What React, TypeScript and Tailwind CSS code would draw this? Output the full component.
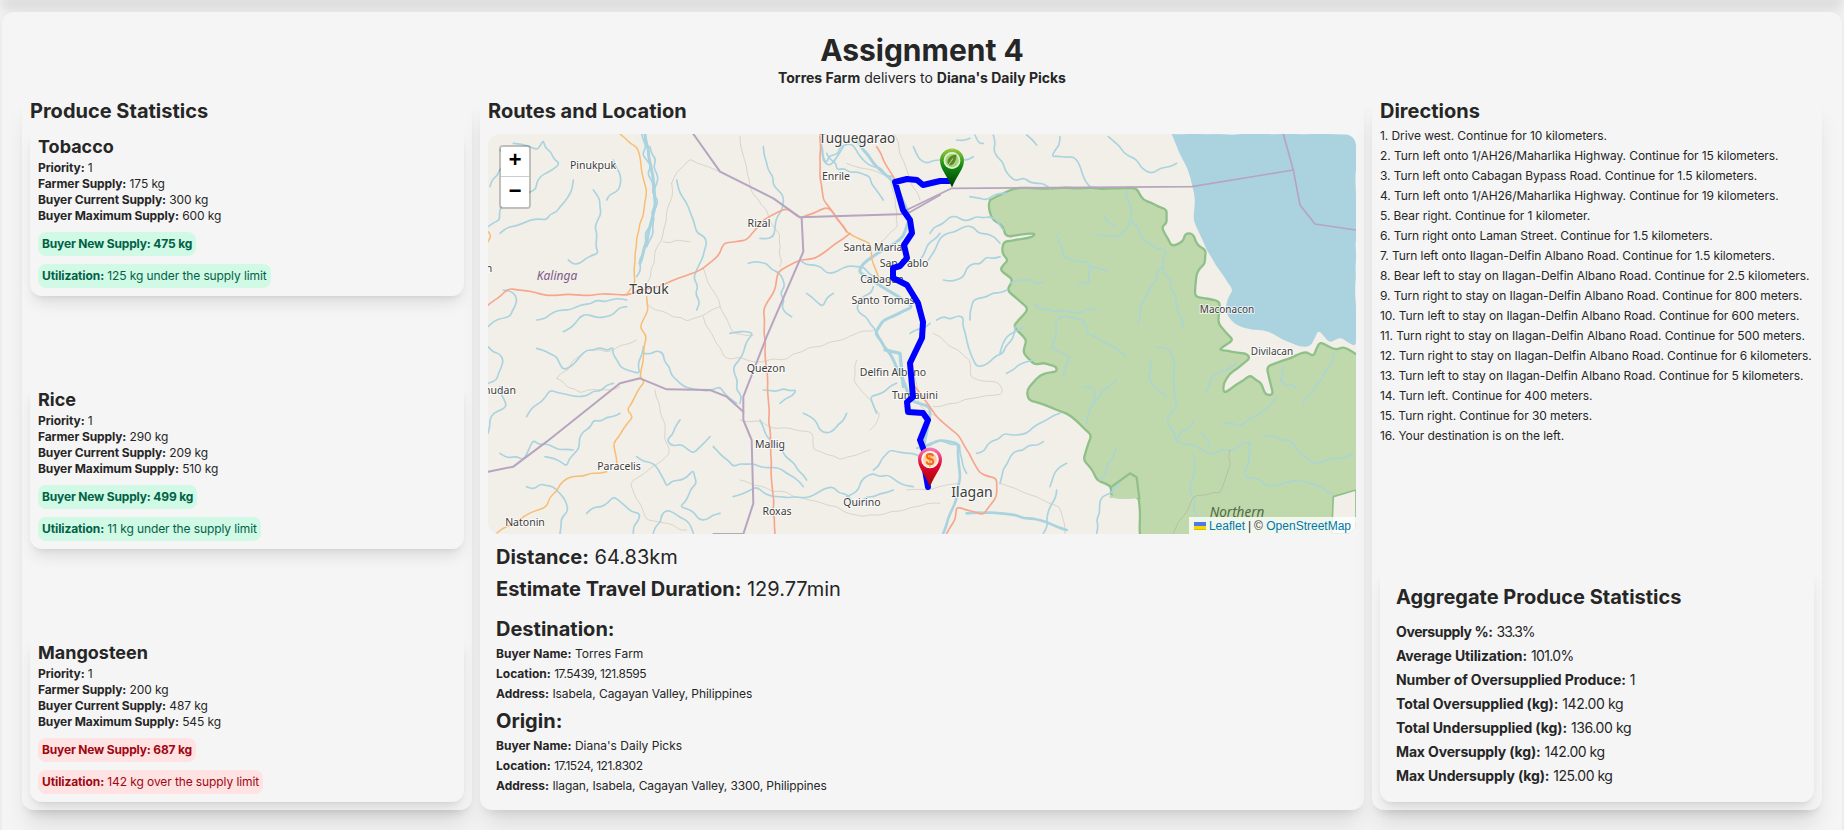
const produce = [
  { name: "Tobacco", farmer: 175, current: 300, max: 600, next: 475, util: "125 kg under the supply limit", over: false },
  { name: "Rice", farmer: 290, current: 209, max: 510, next: 499, util: "11 kg under the supply limit", over: false },
  { name: "Mangosteen", farmer: 200, current: 487, max: 545, next: 687, util: "142 kg over the supply limit", over: true },
];

const directions = [
  "1. Drive west. Continue for 10 kilometers.",
  "2. Turn left onto 1/AH26/Maharlika Highway. Continue for 15 kilometers.",
  "3. Turn left onto Cabagan Bypass Road. Continue for 1.5 kilometers.",
  "4. Turn left onto 1/AH26/Maharlika Highway. Continue for 19 kilometers.",
  "5. Bear right. Continue for 1 kilometer.",
  "6. Turn right onto Laman Street. Continue for 1.5 kilometers.",
  "7. Turn left onto Ilagan-Delfin Albano Road. Continue for 1.5 kilometers.",
  "8. Bear left to stay on Ilagan-Delfin Albano Road. Continue for 2.5 kilometers.",
  "9. Turn right to stay on Ilagan-Delfin Albano Road. Continue for 800 meters.",
  "10. Turn left to stay on Ilagan-Delfin Albano Road. Continue for 600 meters.",
  "11. Turn right to stay on Ilagan-Delfin Albano Road. Continue for 500 meters.",
  "12. Turn right to stay on Ilagan-Delfin Albano Road. Continue for 6 kilometers.",
  "13. Turn left to stay on Ilagan-Delfin Albano Road. Continue for 5 kilometers.",
  "14. Turn left. Continue for 400 meters.",
  "15. Turn right. Continue for 30 meters.",
  "16. Your destination is on the left.",
];

const aggregate = [
  ["Oversupply %:", "33.3%", "tracking-[-0.4px]", "tracking-[-1px]"],
  ["Average Utilization:", "101.0%", "tracking-[-0.15px]", "tracking-[-0.6px]"],
  ["Number of Oversupplied Produce:", "1", "tracking-[-0.1px]", ""],
  ["Total Oversupplied (kg):", "142.00 kg", "tracking-[-0.1px]", "tracking-[-0.4px]"],
  ["Total Undersupplied (kg):", "136.00 kg", "tracking-[-0.1px]", "tracking-[-0.4px]"],
  ["Max Oversupply (kg):", "142.00 kg", "tracking-[-0.15px]", "tracking-[-0.5px]"],
  ["Max Undersupply (kg):", "125.00 kg", "tracking-[-0.15px]", "tracking-[-0.5px]"],
];

// map traces, in 3x crop coordinates of the left and right half of the map
const riversLeft = [
  "M485 42 L500 120 L520 200 L530 260 L510 320 L490 400 L470 470",
  "M510 80 L535 180 L520 300 L500 380",
  "M24 320 L60 300 L70 250 L140 240 L180 170 L240 130 L190 60 L170 90 L100 70",
  "M340 210 L360 260 L345 320 L355 400 L300 430 L265 420",
  "M280 180 L240 260 L200 300 L130 310 L60 340",
  "M590 180 L640 300 L680 370 L650 450 L650 570",
  "M24 620 L90 590 L110 530 L70 510",
  "M170 600 L250 570 L350 540 L440 540",
  "M250 635 L300 590 L380 590 L440 560",
  "M805 430 L860 430 L910 480 L905 560 L935 590",
  "M170 685 L230 710 L250 750 L320 690 L400 680 L420 740 L480 760 L490 680",
  "M490 700 L550 700 L590 780 L660 810 L720 800 L770 850",
  "M140 890 L160 860 L210 810 L300 830 L400 790",
  "M24 680 L70 720 L50 780 L24 790",
  "M24 940 L40 880 L80 860 L60 800",
  "M750 640 L820 640 L790 700 L760 740 L780 850",
  "M850 810 L950 810 L900 850",
  "M195 1010 L260 1040 L340 900 L420 880",
  "M60 1000 L130 1020 L160 960 L280 990",
  "M470 1010 L530 1040 L560 1100 L640 1050 L650 1090 L600 1160 L680 1200 L720 1180",
  "M140 1100 L220 1100 L260 1150 L240 1240",
  "M700 980 L760 1040 L840 1040 L920 1060 L970 1100",
  "M840 900 L870 960 L930 1020 L980 1080",
  "M760 1130 L830 1100 L900 1130 L1010 1120 L1060 1100 L1130 1160 L1160 1130 L1240 1110",
  "M520 1240 L560 1170 L620 1200 L640 1240",
  "M850 80 L880 170 L910 250 L880 350 L840 355",
  "M1020 50 L1040 130 L1080 80 L1110 70 L1160 130 L1240 170",
  "M1040 100 L1070 150 L1170 170 L1210 240",
  "M1300 80 L1340 130 L1380 120",
  "M1230 480 L1130 440 L1040 460 L960 420",
  "M1380 340 L1340 380 L1320 420",
  "M1190 880 L1170 830 L1250 790",
  "M1180 1050 L1230 990 L1280 1000 L1320 1010",
  "M1100 1130 L1180 1060 L1300 1100",
  "M30 200 L90 120 L60 90",
  "M400 120 L420 200 L380 240",
  "M600 900 L560 960 L640 1000 L690 950",
  "M320 1180 L400 1130 L480 1180 L460 1240",
  "M1200 660 L1130 560 L1180 500",
  "M980 520 L1030 560 L1060 520",
  "M1100 880 L1040 940 L970 880",
];

const riversRight = [
  "M280 45 L290 110 L330 170 L410 190 L450 205",
  "M380 45 L410 75",
  "M625 50 L690 110 L760 160 L830 130",
  "M480 50 L455 110 L520 110 L550 170 L570 200",
  "M225 45 L235 70 L250 70",
  "M170 60 L210 55 M180 120 L220 110",
  "M210 230 L260 240 L320 220",
  "M90 340 L150 290 L210 300 L270 290 L310 330",
  "M130 480 L170 480 L220 430 L300 410",
  "M85 420 L140 340 L220 320 L300 370",
  "M210 600 L220 540 L320 510",
  "M110 600 L190 590 L200 660 L230 740 L310 700 L345 620",
  "M30 640 L90 610",
  "M370 620 L320 650 L300 700",
  "M230 1000 L310 940 L380 940 L440 900 L480 880",
  "M300 1090 L330 1010 L430 965",
  "M450 1100 L480 1040 L500 1030 M430 1240 L470 1110",
  "M50 985 L110 960 L180 970 L200 1060",
  "M590 1240 L600 1140 L660 1090",
  "M320 760 L400 720",
];

const riversPark = [
  "M680 210 L690 300 L730 360 L800 390 L790 440 L750 500 L720 560 L715 610",
  "M790 440 L830 540 L850 620",
  "M585 345 L660 350 L690 300 M610 285 L650 320",
  "M470 345 L490 410 L570 430 L570 490 L535 495 M570 440 L620 455",
  "M330 490 L430 485",
  "M400 550 L420 570 L520 580 L590 570",
  "M455 680 L480 590 L550 600 L560 640 L620 670 L675 710",
  "M455 680 L510 710 L490 770",
  "M770 680 L810 690 L820 760 L830 850 L800 900 L840 970 L950 1000 L1050 970",
  "M750 720 L750 780 L800 830",
  "M650 780 L580 850 L560 910 M550 800 L580 800 L580 850",
  "M830 960 L880 905 M905 940 L930 980",
  "M1130 830 L1080 880 L1020 920 L970 910",
  "M1010 730 L950 760 L915 820",
  "M1150 740 L1140 780 L1190 810 M1300 700 L1270 760 L1210 850",
  "M1050 970 L1030 1060 L1100 1100 L1200 1080 L1300 1120",
  "M1090 950 L1170 960 L1240 1030 L1360 1000",
  "M880 1000 L870 1120 L900 1200",
  "M650 980 L620 1040 L600 1080",
];

const roads = [
  "M24 555 L60 530 L85 505 L140 512 L190 525 L290 525 L400 523 L440 525 L560 490 L670 445 L720 400 L730 370 L800 360 L850 300 L920 265 L960 295 L1045 262 L1100 335",
  "M1020 42 L1020 150 L1030 240 L1100 335",
  "M1190 80 L1245 180",
  "M1110 340 L1005 415 L960 420 L895 455 L880 520 L850 570 L885 1242",
];

const tracks = [
  "M420 42 L470 80 L500 220 L465 400 L465 490 L440 525",
  "M500 530 L505 570 L480 620 L500 650 L480 775 L495 785 L440 870 L460 890 L400 970 L410 1040",
  "M380 1055 L260 1075 L210 1130 L200 1160 L130 1190 L50 1240",
  "M1100 335 L1170 370 L1175 420 L1195 470",
  "M24 335 L35 345 L24 365",
];

const borders = [
  "M640 42 L720 155 L880 235 L960 292 L1280 282 L1380 225",
  "M965 295 L970 395 L860 650 L790 830 L790 900 L815 960 L820 1150 L790 1242 L700 1242",
  "M24 1055 L100 1040 L200 965 L420 790 L480 775 L560 808 L690 810 L740 830 L790 875",
];

const greyLines = [
  "M575 190 L560 300 L500 490 M630 365 L550 365",
  "M575 190 L630 115 L720 155",
  "M670 445 L760 640 L820 645",
  "M505 555 L620 605 L720 560",
  "M670 590 L730 710 L800 720 L900 720 L1000 680 L1130 640 L1190 630",
  "M230 775 L320 690 L400 690 L470 660",
  "M230 775 L300 820 L420 800",
  "M525 810 L570 1000 L450 1090 L500 1200 L620 1230",
  "M780 900 L1000 940 L1000 990 L1080 1020 L1170 990",
  "M780 1080 L1150 1190 L1380 1150",
  "M1130 720 L1120 780 L1200 880 L1170 930",
  "M780 50 L800 140 L810 200 L900 340 L900 440",
  "M1240 40 L1320 240 M1100 130 L1230 170 L1255 320 L1200 370",
];

const labels = [
  { x: 369, y: 9, t: "Tuguegarao", s: 13.5 },
  { x: 105, y: 35, t: "Pinukpuk", s: 10.5 },
  { x: 348, y: 46, t: "Enrile", s: 10.5 },
  { x: 271, y: 93, t: "Rizal", s: 10.5 },
  { x: 385, y: 117, t: "Santa Maria", s: 10.5 },
  { x: 416, y: 133, t: "San Pablo", s: 10.5 },
  { x: 394, y: 149, t: "Cabagan", s: 10.5 },
  { x: 395, y: 170, t: "Santo Tomas", s: 10.5 },
  { x: 161, y: 160, t: "Tabuk", s: 14 },
  { x: 278, y: 238, t: "Quezon", s: 10.5 },
  { x: 405, y: 242, t: "Delfin Albano", s: 10.5 },
  { x: 427, y: 265, t: "Tumauini", s: 10.5 },
  { x: 282, y: 314, t: "Mallig", s: 10.5 },
  { x: 131, y: 336, t: "Paracelis", s: 10.5 },
  { x: 374, y: 372, t: "Quirino", s: 10.5 },
  { x: 289, y: 381, t: "Roxas", s: 10.5 },
  { x: 37, y: 392, t: "Natonin", s: 10.5 },
  { x: 12, y: 260, t: "nudan", s: 10.5 },
  { x: 1, y: 138, t: "n", s: 10.5 },
  { x: 484, y: 363, t: "Ilagan", s: 14 },
  { x: 739, y: 179, t: "Maconacon", s: 10 },
  { x: 784, y: 221, t: "Divilacan", s: 10 },
];

const route =
  "M461 47 L452 47 L435 51 L429 46 L419 45 L407 48 L415 76 L422 86 L424 99 L416 111 L419 124 L412 132 L405 134 L405 144 L419 151 L430 169 L435 188 L434 204 L422 229 L425 263 L419 268 L420 278 L435 279 L440 286 L432 306 L437 319 L436 330 L440 353";

const PIN = "M12 0 C18.6 0 24 5.4 24 12 C24 20 17 27 12 39 C7 27 0 20 0 12 C0 5.4 5.4 0 12 0 Z";

const noise = (k: number) => {
  const v = Math.sin(k * 12.9898) * 43758.5453;
  return (v - Math.floor(v)) * 2 - 1;
};

// breaks a straight trace into a natural wobbling line
function wobble(d: string, amp: number, step: number) {
  return d
    .split("M")
    .filter(Boolean)
    .map((part, index) => {
      const closed = part.includes("Z");
      const n = (part.match(/-?\d+(\.\d+)?/g) || []).map(Number);
      const pts: number[][] = [];
      for (let i = 0; i < n.length; i += 2) pts.push([n[i], n[i + 1]]);
      if (closed) pts.push(pts[0]);
      const out: number[][] = [];
      pts.forEach((p, i) => {
        if (i === pts.length - 1) {
          out.push(p);
          return;
        }
        const q = pts[i + 1];
        const dx = q[0] - p[0];
        const dy = q[1] - p[1];
        const len = Math.hypot(dx, dy) || 1;
        const count = Math.max(1, Math.round(len / step));
        for (let j = 0; j < count; j++) {
          const t = j / count;
          const off = j === 0 ? 0 : noise(p[0] + p[1] * 3 + j * 7 + index) * amp;
          out.push([p[0] + dx * t - (dy / len) * off, p[1] + dy * t + (dx / len) * off]);
        }
      });
      let path = `M${out[0][0].toFixed(1)} ${out[0][1].toFixed(1)}`;
      for (let i = 1; i < out.length - 1; i++) {
        const mx = (out[i][0] + out[i + 1][0]) / 2;
        const my = (out[i][1] + out[i + 1][1]) / 2;
        path += ` Q${out[i][0].toFixed(1)} ${out[i][1].toFixed(1)} ${mx.toFixed(1)} ${my.toFixed(1)}`;
      }
      const last = out[out.length - 1];
      return `${path} L${last[0].toFixed(1)} ${last[1].toFixed(1)}${closed ? " Z" : ""}`;
    })
    .join(" ");
}

function MapView() {
  return (
    <div className="relative mx-2 mt-[9px] h-[400px] overflow-hidden rounded-xl bg-[#f2efe9]">
      <svg width="868" height="400" viewBox="0 0 868 400" className="block">
        <defs>
          <linearGradient id="greenPin" x1="0" y1="0" x2="0" y2="1">
            <stop offset="0" stopColor="#9ccc3c" />
            <stop offset="0.45" stopColor="#128a12" />
            <stop offset="1" stopColor="#003a00" />
          </linearGradient>
          <linearGradient id="redPin" x1="0" y1="0" x2="0" y2="1">
            <stop offset="0" stopColor="#f77fc0" />
            <stop offset="0.45" stopColor="#e00a32" />
            <stop offset="1" stopColor="#a80000" />
          </linearGradient>
          <linearGradient id="coin" x1="0" y1="0" x2="0" y2="1">
            <stop offset="0" stopColor="#ff9a3c" />
            <stop offset="1" stopColor="#ffe0b0" />
          </linearGradient>
        </defs>

        <g transform="translate(-8 -14) scale(0.33333)" fill="none" strokeLinejoin="round" strokeLinecap="round">
          {greyLines.map((d) => (
            <path key={d} d={wobble(d, 7, 22)} stroke="#cdc9bf" strokeWidth="2.2" />
          ))}
          <path d={wobble("M1130 60 L1180 130 L1245 190 L1290 290 L1270 350 L1150 430 L1135 455 L1160 470 L1190 490 L1300 560 L1210 600 L1185 640 L1230 700 L1265 770 L1290 840 L1350 860 L1345 910 L1330 990", 3, 30)} stroke="#a9d3df" strokeWidth="9" />
          <path d="M1090 80 C1060 130 1050 150 1030 120 L1022 70" stroke="#a9d3df" strokeWidth="5" />
          <path d="M1215 690 L1260 700 L1270 800" stroke="#a9d3df" strokeWidth="10" />
          <path d={wobble("M495 42 L515 150 L525 260 L505 340 L480 430", 3, 24)} stroke="#a9d3df" strokeWidth="9" />
          {riversLeft.map((d) => (
            <path key={d} d={wobble(d, 10, 22)} stroke="#a9d3df" strokeWidth="5" />
          ))}
          {tracks.map((d) => (
            <path key={d} d={wobble(d, 4, 24)} stroke="#f8bd72" strokeWidth="4.5" />
          ))}
          {roads.map((d) => (
            <path key={d} d={wobble(d, 2.5, 24)} stroke="#f7a68c" strokeWidth="5" />
          ))}
          {borders.map((d) => (
            <path key={d} d={d} stroke="#b7a4bf" strokeWidth="6" />
          ))}
        </g>

        <g transform="translate(412 -14) scale(0.33333)" strokeLinejoin="round" strokeLinecap="round">
          <path
            d={wobble("M815 42 L1368 42 L1368 680 L1320 650 L1290 670 L1255 630 L1230 680 L1200 680 L1090 630 L1060 630 L1000 610 L975 570 L985 530 L1000 510 L950 440 L920 390 L880 300 L885 240 L875 190 L855 130 Z", 3, 30)}
            fill="#aad3df"
          />
          <path
            d={wobble("M270 240 L320 215 L345 205 L710 205 L730 240 L800 268 L800 310 L785 320 L815 380 L850 365 L855 340 L880 340 L890 375 L918 390 L915 430 L890 460 L885 530 L960 545 L955 610 L1000 660 L955 690 L1040 700 L1050 715 L990 760 L970 790 L970 820 L1050 765 L1085 790 L1095 825 L1120 825 L1100 740 L1220 695 L1240 710 L1260 665 L1310 690 L1330 680 L1380 710 L1390 1260 L722 1260 L716 1130 L632 1130 L635 1100 L590 1080 L580 1055 L550 1020 L575 945 L500 880 L385 840 L380 810 L420 765 L470 755 L470 740 L430 728 L405 735 L370 700 L380 660 L340 620 L385 565 L320 510 L340 480 L300 450 L325 420 L305 400 L310 365 L400 350 L405 340 L330 350 L315 345 L310 320 L275 295 L265 260 Z", 2.5, 26)}
            fill="#c0d9ac"
            stroke="#8fc08a"
            strokeWidth="7"
          />
          <path d="M632 1130 L716 1130 L710 1072" fill="none" stroke="#c0d9ac" strokeWidth="8" />
          <path d="M635 1100 L690 1060 L710 1072 L718 1135" fill="none" stroke="#8fc08a" strokeWidth="7" />
          <path d="M1295 1240 L1300 1130 L1368 1110 L1368 1244 Z" fill="#f2efe9" stroke="#8fc08a" strokeWidth="5" />
          <g fill="none">
            {riversRight.map((d) => (
              <path key={d} d={wobble(d, 10, 22)} stroke="#a9d3df" strokeWidth="5" />
            ))}
            {riversPark.map((d) => (
              <path key={d} d={wobble(d, 9, 22)} stroke="#a9d5d6" strokeWidth="4.5" />
            ))}
            <path d={wobble("M820 1240 L880 1130 L960 1120 L985 1050 L990 990", 6, 20)} stroke="#b5bfa5" strokeWidth="3" />
            <path d={wobble("M40 760 L60 860 L110 890 M100 640 L210 720 L210 770 L300 790 L310 820 L100 860", 5, 24)} stroke="#cdc9bf" strokeWidth="2.2" />
            <path d={wobble("M300 1090 L480 1160 L495 1240 M20 1110 L90 1110 L180 1090", 5, 24)} stroke="#cdc9bf" strokeWidth="2.2" />
            <path d={wobble("M60 985 L120 960 L175 970 L180 1060 L165 1150 L130 1240", 3, 26)} stroke="#a9d3df" strokeWidth="8" />
            <path d={wobble("M200 1180 L300 1180 L420 1200 L500 1230", 3, 26)} stroke="#a9d3df" strokeWidth="8" />
            <path d={wobble("M45 800 L110 890 L175 945 L240 1060 L290 1075 L290 1130 L250 1185 L170 1160 L165 1200 L140 1240", 2, 24)} stroke="#f7a68c" strokeWidth="5" />
            <path d="M155 205 L875 200 L1180 150 M1150 42 L1180 150 L1200 255 L1245 312 L1368 330 M155 205 L20 270" stroke="#b7a4bf" strokeWidth="5" />
          </g>
        </g>

        {labels.map((l) => (
          <text
            key={l.t}
            x={l.x}
            y={l.y}
            fontSize={l.s}
            textAnchor="middle"
            fontFamily="'Noto Sans', sans-serif"
            fill="#3d3d3d"
            stroke="#ffffff"
            strokeOpacity="0.7"
            strokeWidth="2"
            paintOrder="stroke"
          >
            {l.t}
          </text>
        ))}
        <text x="69" y="146" fontSize="12" fontStyle="italic" textAnchor="middle" fontFamily="'Noto Sans', sans-serif" fill="#7e5a86">
          Kalinga
        </text>
        <text x="749" y="383" fontSize="13.5" fontStyle="italic" textAnchor="middle" fontFamily="'Noto Sans', sans-serif" fill="#4f6a45">
          Northern
        </text>

        <path d={route} fill="none" stroke="#0000ff" strokeWidth="6" strokeLinejoin="round" strokeLinecap="round" />

        <g transform="translate(452 14.5)">
          <path d={PIN} fill="url(#greenPin)" />
          <circle cx="12" cy="12" r="8.4" fill="#e3f3d2" />
          <circle cx="12" cy="12" r="6.8" fill="#a9d47a" />
          <path d="M16.5 6 C11 6.5 7 9.5 7.5 14 C7.8 16 9 17 10.5 17 C14.5 16.5 16.5 11 16.5 6 Z" fill="#5c8a28" />
          <path d="M7 18.5 L13 10" stroke="#e3f3d2" strokeWidth="0.7" />
        </g>
        <g transform="translate(430 313.5)">
          <path d={PIN} fill="url(#redPin)" />
          <circle cx="12" cy="12" r="8.8" fill="#fff6f0" />
          <circle cx="12" cy="12.5" r="7" fill="url(#coin)" opacity="0.6" />
          <text x="12" y="17.8" fontSize="16" fontWeight="700" textAnchor="middle" fontFamily="'Liberation Sans', sans-serif" fill="#f26a12">
            $
          </text>
        </g>
      </svg>

      <div className="absolute left-[11px] top-[11px] w-[32px] overflow-hidden rounded-[4px] border-2 border-black/20 bg-clip-padding font-['Liberation_Mono',monospace] text-[22px] font-bold text-black">
        <div className="flex h-[30px] w-full items-center justify-center border-b border-[#cccccc] bg-white">+</div>
        <div className="flex h-[30px] w-full items-center justify-center bg-white">−</div>
      </div>

      <div className="absolute bottom-0 right-0 flex h-[17px] items-center bg-white/80 px-[5px] font-['Liberation_Sans',sans-serif] text-xs text-[#333333]">
        <svg width="12" height="8" viewBox="0 0 12 8" className="mr-[3px]">
          <rect width="12" height="4" fill="#4C7BE1" />
          <rect y="4" width="12" height="3" fill="#FFD500" />
          <rect y="7" width="12" height="1" fill="#E0BC00" />
        </svg>
        <span className="text-[#0078a8]">Leaflet</span>
        <span className="mx-[3px]">|</span>
        <span>©&nbsp;</span>
        <span className="text-[#0078a8]">OpenStreetMap</span>
      </div>
    </div>
  );
}

function ProduceCard({ item }: { item: (typeof produce)[number] }) {
  const tone = item.over ? "bg-red-100 text-red-800" : "bg-emerald-100 text-emerald-800";
  return (
    <div className="h-[168px] rounded-xl bg-[#f5f5f5] px-2 pt-[5px] shadow-[0_10px_15px_-3px_rgba(0,0,0,0.1),0_4px_6px_-4px_rgba(0,0,0,0.1)]">
      <h3 className="text-lg leading-[27px] font-bold">{item.name}</h3>
      <div className="text-xs leading-4 tracking-[-0.1px]">
        <p><b>Priority:</b> 1</p>
        <p><b>Farmer Supply:</b> {item.farmer} kg</p>
        <p><b>Buyer Current Supply:</b> {item.current} kg</p>
        <p><b>Buyer Maximum Supply:</b> {item.max} kg</p>
      </div>
      <div className={`mt-2 w-fit rounded-lg p-1 text-xs leading-4 font-bold tracking-[-0.17px] ${tone}`}>Buyer New Supply: {item.next} kg</div>
      <div className={`mt-2 w-fit rounded-lg p-1 text-xs leading-4 tracking-[-0.1px] ${tone}`}>
        <b>Utilization:</b> {item.util}
      </div>
    </div>
  );
}

function Place({ title, rows, className }: { title: string; rows: string[][]; className: string }) {
  return (
    <div className={className}>
      <h3 className="text-xl leading-7 font-bold">{title}</h3>
      <div className="mt-[1px] text-xs leading-5">
        {rows.map(([label, value, fit]) => (
          <p key={label}>
            <b>{label}</b> <span className={fit}>{value}</span>
          </p>
        ))}
      </div>
    </div>
  );
}

export default function App() {
  const column = "flex h-[715px] flex-col rounded-xl bg-[#f5f5f5] px-2 pt-[2px] shadow-[0_20px_25px_-5px_rgba(0,0,0,0.1),0_8px_10px_-6px_rgba(0,0,0,0.1)]";
  return (
    <div className="h-[830px] overflow-hidden bg-[#f5f5f5] font-['Inter',sans-serif] text-[#262626]">
      <div className="-mt-2 h-2 shadow-[0_6px_12px_rgba(0,0,0,0.16)]" />
      <div className="mx-[2px] mt-3 h-[840px] rounded-xl bg-[#f5f5f5] px-5 pt-5 shadow-[0_0_15px_rgba(0,0,0,0.08)]">
        <h1 className="text-center text-3xl leading-9 font-bold">Assignment 4</h1>
        <p className="text-center text-sm leading-5">
          <b>Torres Farm</b> delivers to <b>Diana's Daily Picks</b>
        </p>

        <div className="mt-[7px] flex gap-2">
          <section className={`${column} w-[450px] pb-2`}>
            <h2 className="text-xl leading-7 font-bold">Produce Statistics</h2>
            <div className="mt-[3px] flex flex-1 flex-col justify-between">
              {produce.map((item) => (
                <ProduceCard key={item.name} item={item} />
              ))}
            </div>
          </section>

          <section className={`${column} w-[884px] !px-0`}>
            <h2 className="px-2 text-xl leading-7 font-bold">Routes and Location</h2>
            <MapView />
            <div className="mt-[9px] px-4 text-xl leading-7">
              <p><b>Distance:</b> 64.83km</p>
              <p className="mt-1"><b>Estimate Travel Duration:</b> 129.77min</p>
            </div>
            <Place
              className="mt-3 px-4"
              title="Destination:"
              rows={[
                ["Buyer Name:", "Torres Farm", ""],
                ["Location:", "17.5439, 121.8595", "tracking-[-0.45px]"],
                ["Address:", "Isabela, Cagayan Valley, Philippines", "tracking-[-0.06px]"],
              ]}
            />
            <Place
              className="mt-[3px] px-4"
              title="Origin:"
              rows={[
                ["Buyer Name:", "Diana's Daily Picks", ""],
                ["Location:", "17.1524, 121.8302", "tracking-[-0.45px]"],
                ["Address:", "Ilagan, Isabela, Cagayan Valley, 3300, Philippines", "tracking-[-0.1px]"],
              ]}
            />
          </section>

          <section className={`${column} w-[450px] pb-2`}>
            <h2 className="text-xl leading-7 font-bold">Directions</h2>
            <div className="mt-px text-xs leading-5 tracking-[-0.08px] whitespace-nowrap">
              {directions.map((d) => (
                <p key={d}>{d}</p>
              ))}
            </div>
            <div className="mt-auto h-[235px] rounded-xl bg-[#f5f5f5] px-4 pt-4 shadow-[0_10px_15px_-3px_rgba(0,0,0,0.1),0_4px_6px_-4px_rgba(0,0,0,0.1)]">
              <h3 className="text-xl leading-7 font-bold">Aggregate Produce Statistics</h3>
              <div className="mt-[9px] text-sm leading-6">
                {aggregate.map(([label, value, labelFit, valueFit]) => (
                  <p key={label}>
                    <b className={labelFit}>{label}</b> <span className={valueFit}>{value}</span>
                  </p>
                ))}
              </div>
            </div>
          </section>
        </div>
      </div>
    </div>
  );
}
